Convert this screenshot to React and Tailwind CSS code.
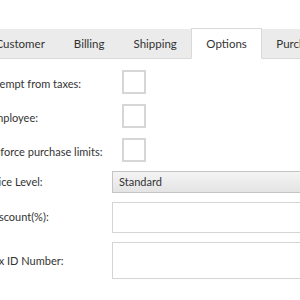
export default function App() {
  const tabs = ["Customer", "Billing", "Shipping", "Options", "Purchasing"];
  return (
    <div className="w-[300px] h-[300px] overflow-hidden bg-white relative" style={{ fontFamily: 'Lato, "Noto Sans", sans-serif' }}>
      <div className="h-[29px]" />
      <div className="flex h-[30px] bg-[#ebebeb] border-b border-[#d9d9d9] w-[400px] -ml-[19px]">
        {tabs.map((t) => (
          <div
            key={t}
            className={
              t === "Options"
                ? "shrink-0 h-[31px] -mt-[1px] bg-white border border-[#d9d9d9] border-b-white px-[14px] flex items-center text-[11.5px] text-[#333]"
                : "shrink-0 h-[29px] px-[14.5px] flex items-center text-[11.5px] text-[#333]"
            }
          >
            {t}
          </div>
        ))}
      </div>
      <div className="flex flex-col -ml-[12px] mt-[11px] text-[11px] text-[#333]">
        {["Exempt from taxes:", "Employee:", "Enforce purchase limits:"].map((l) => (
          <div key={l} className="flex items-center h-[24px] mb-[10px]">
            <div className="w-[134px] shrink-0 pt-[4px]">{l}</div>
            <div className="shrink-0 w-[24px] h-[24px] border-2 border-[#d6d6d6] bg-white" />
          </div>
        ))}
        <div className="flex items-center h-[22px] -mt-[1px]">
          <div className="w-[124px] shrink-0">Price Level:</div>
          <div className="shrink-0 w-[220px] h-[22px] border border-[#c4c4c4] bg-gradient-to-b from-[#f4f4f4] to-[#e4e4e4] flex items-center pl-[6px]">Standard</div>
        </div>
        <div className="flex items-center h-[31px] mt-[9px]">
          <div className="w-[124px] shrink-0">Discount(%):</div>
          <div className="shrink-0 w-[220px] h-[31px] border border-[#d4d4d4] bg-white" />
        </div>
        <div className="flex items-center h-[37px] mt-[9px]">
          <div className="w-[124px] shrink-0 pt-[2px]">Tax ID Number:</div>
          <div className="shrink-0 w-[220px] h-[37px] border border-[#d4d4d4] bg-white" />
        </div>
      </div>
    </div>
  );
}
